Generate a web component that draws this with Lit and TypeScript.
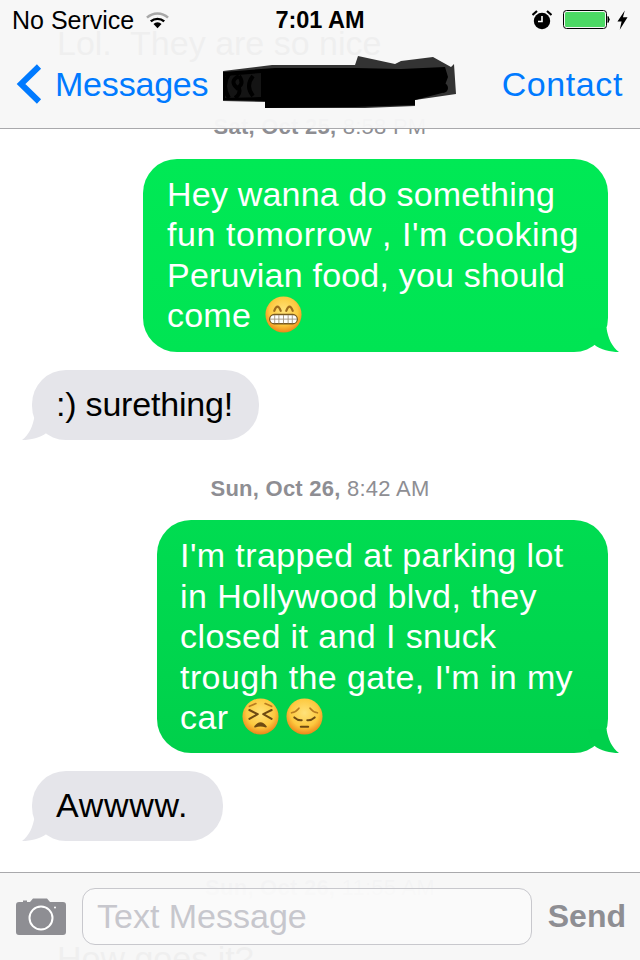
import { LitElement, html, css, svg } from "lit";
import { customElement } from "lit/decorators.js";

const faceDefs = svg`
  <defs>
    <radialGradient id="face" cx="50%" cy="40%" r="60%">
      <stop offset="0" stop-color="#ffe27a" />
      <stop offset="0.65" stop-color="#fdc93f" />
      <stop offset="1" stop-color="#ec861a" />
    </radialGradient>
  </defs>
`;

const faces: Record<string, ReturnType<typeof svg>> = {
  grin: svg`
    <path d="M10 16q3.500-9 7 0M23 16q3.500-9 7 0" fill="none" stroke="#a06c1c" stroke-width="2.400" stroke-linecap="round" />
    <rect x="5" y="20" width="30" height="10" rx="5" fill="#fff" stroke="#7a5a20" stroke-width="1.400" />
    <path d="M5.500 25h29M10.500 20.500v9M15 20.500v9M20 20.500v9M25 20.500v9M29.500 20.500v9" stroke="#a39680" stroke-width="1" />
  `,
  persevere: svg`
    <path d="M8 13l9 4.500-9 5M32 13l-9 4.500 9 5" fill="none" stroke="#6e4a12" stroke-width="2.200" stroke-linecap="round" stroke-linejoin="round" />
    <path d="M8 9l7-3M32 9l-7-3" fill="none" stroke="#b87c20" stroke-width="1.800" stroke-linecap="round" />
    <path d="M14 31q6-8 12 0q-6-2-12 0z" fill="#6e4a12" stroke="#6e4a12" stroke-width="1.600" stroke-linejoin="round" />
  `,
  pensive: svg`
    <path d="M6 16q5-1 8-5M34 16q-5-1-8-5" fill="none" stroke="#b87c20" stroke-width="1.800" stroke-linecap="round" />
    <path d="M9 21q4 3.500 8 3M31 21q-4 3.500-8 3" fill="none" stroke="#6e4a12" stroke-width="2.200" stroke-linecap="round" />
    <path d="M16 31h8" stroke="#6e4a12" stroke-width="2.200" stroke-linecap="round" />
  `,
};

function emoji(name: string) {
  return html`<svg class="emoji" viewBox="0 0 40 40">
    ${faceDefs}
    <circle cx="20" cy="20" r="19.500" fill="url(#face)" />
    ${faces[name]}
  </svg>`;
}

@customElement("app-root")
export class AppRoot extends LitElement {
  static styles = css`
    :host {
      display: block;
      position: relative;
      width: 640px;
      height: 960px;
      overflow: hidden;
      background: #fff;
      font-family: "Liberation Sans", Arial, sans-serif;
      color: #000;
    }

    .thread {
      display: flex;
      flex-direction: column;
      padding-top: 7px;
    }

    .stamp {
      font-size: 22px;
      line-height: 24px;
      letter-spacing: 0.25px;
      color: #8e8e93;
      text-align: center;
    }

    .stamp.first {
      margin-top: 36px;
      margin-bottom: 20px;
    }

    .stamp.second {
      margin-top: 37px;
      margin-bottom: 19px;
    }

    .stamp.third {
      margin-top: 35px;
      margin-bottom: 22px;
    }

    .bubble {
      position: relative;
      font-size: 34px;
      line-height: 40.500px;
      letter-spacing: 0.2px;
      border-radius: 34px;
      padding: 16px 25px 15px 25px;
      white-space: pre;
    }

    .out {
      align-self: flex-end;
      margin-right: 32px;
      color: #fff;
    }

    .in {
      align-self: flex-start;
      margin-left: 32px;
      background: #e5e5ea;
      margin-top: 18px;
      padding: 14px 26px 16px 24px;
      letter-spacing: -0.2px;
    }

    .in.aw {
      letter-spacing: 0.7px;
      padding-right: 35px;
    }

    .out.top {
      background: linear-gradient(#00e955, #00e453);
      padding-left: 24px;
      padding-right: 29px;
      padding-top: 15px;
      padding-bottom: 16px;
    }

    .wide {
      letter-spacing: 0.55px;
    }

    .out.low {
      background: linear-gradient(#00dc51, #00d04b);
      letter-spacing: 0.4px;
      padding: 15px 35px 15px 23px;
    }

    .ghost {
      align-self: flex-start;
      background: #e5e5ea;
      margin-left: 32px;
      letter-spacing: 0;
    }

    .tail {
      position: absolute;
      bottom: 0;
      width: 32px;
      height: 24px;
    }

    .out .tail {
      right: -12px;
    }

    .in .tail {
      left: -11px;
      transform: scaleX(-1);
    }

    .emoji {
      display: inline-block;
      width: 37px;
      height: 37px;
      margin: -10px 7px -10px 4px;
      vertical-align: 4px;
    }

    .emoji + .emoji {
      margin-left: 0;
    }

    .topbar {
      position: absolute;
      top: 0;
      left: 0;
      right: 0;
      height: 128px;
      background: rgba(247, 247, 247, 0.97);
      border-bottom: 1px solid #a9a9ac;
    }

    .status {
      display: grid;
      grid-template-columns: 1fr auto 1fr;
      align-items: center;
      height: 40px;
      padding: 0 12px 0 12px;
      font-size: 25px;
    }

    .status-left {
      display: flex;
      align-items: center;
      gap: 12px;
    }

    .status-right {
      display: flex;
      align-items: center;
      justify-content: flex-end;
    }

    .alarm {
      margin-right: 11px;
    }

    .bolt {
      margin-left: 7px;
    }

    .time {
      font-weight: 700;
      font-size: 23.500px;
    }

    .nav {
      display: flex;
      align-items: center;
      height: 88px;
      font-size: 34px;
      color: #007aff;
      padding: 0 17px 0 16px;
    }

    .back {
      display: flex;
      align-items: center;
      gap: 13px;
      flex: 1;
      letter-spacing: -0.2px;
    }

    .contact {
      letter-spacing: 0.6px;
    }

    .redact {
      position: absolute;
      left: 215px;
      top: 50px;
      width: 250px;
      height: 65px;
    }

    .inputbar {
      position: absolute;
      left: 0;
      right: 0;
      bottom: 0;
      height: 87px;
      background: rgba(247, 247, 247, 0.97);
      border-top: 1px solid #a9a9ac;
      display: flex;
      align-items: center;
      padding: 0 14px 0 16px;
    }

    .field {
      flex: 1;
      height: 57px;
      margin: -1px 16px 0 16px;
      border: 1px solid #c8c8cd;
      border-radius: 13px;
      background: rgba(255, 255, 255, 0.4);
      font-size: 34px;
      line-height: 55px;
      padding-left: 14px;
      color: #c7c7cd;
      box-sizing: border-box;
    }

    .send {
      font-size: 32px;
      font-weight: 700;
      color: #8e8e93;
    }
  `;

  private tail(color: string) {
    return html`<svg class="tail" viewBox="0 0 32 24">
      <path d="M18.500 0C20 10 24 19 31 24C22 24 13 22 6 16.500L0 0Z" fill=${color} />
    </svg>`;
  }

  render() {
    return html`
      <div class="thread">
        <div class="bubble ghost">Lol.  They are so nice</div>
        <div class="stamp first"><b>Sat, Oct 25,</b> 8:58 PM</div>
        <div class="bubble out top">Hey wanna do something
<span class="wide">fun tomorrow , I'm cooking</span>
Peruvian food, you should
come ${emoji("grin")}${this.tail("#00e453")}</div>
        <div class="bubble in">:) surething!${this.tail("#e5e5ea")}</div>
        <div class="stamp second"><b>Sun, Oct 26,</b> 8:42 AM</div>
        <div class="bubble out low">I'm trapped at parking lot
in Hollywood blvd, they
closed it and I snuck
trough the gate, I'm in my
car ${emoji("persevere")}${emoji("pensive")}${this.tail("#00d04b")}</div>
        <div class="bubble in aw">Awwww.${this.tail("#e5e5ea")}</div>
        <div class="stamp third"><b>Sun, Oct 26,</b> 11:55 AM</div>
        <div class="bubble ghost">How goes it?</div>
      </div>

      <div class="topbar">
        <div class="status">
          <div class="status-left">
            <span>No Service</span>
            <svg width="23" height="18" viewBox="0 0 24 18">
              <path d="M1 6.500a16 16 0 0 1 22 0" fill="none" stroke="#a8a8a8" stroke-width="2.600" />
              <path d="M5 10.500a10.500 10.500 0 0 1 14 0" fill="none" stroke="#000" stroke-width="2.600" />
              <path d="M12 17.500l-4.200-4.400a6 6 0 0 1 8.400 0z" fill="#000" />
            </svg>
          </div>
          <div class="time">7:01 AM</div>
          <div class="status-right">
            <svg class="alarm" width="20" height="20" viewBox="0 0 20 20">
              <circle cx="10" cy="11" r="8.200" fill="#000" />
              <path d="M10 6v5.500H6" fill="none" stroke="#fff" stroke-width="1.600" />
              <path d="M0.500 5L5 1M19.500 5L15 1" stroke="#000" stroke-width="2.200" />
            </svg>
            <svg width="47" height="20" viewBox="0 0 47 20">
              <rect x="0.500" y="0.500" width="43" height="18" rx="3" fill="none" stroke="#000" />
              <rect x="2" y="2" width="40" height="15" rx="1.500" fill="#4cd964" />
              <path d="M45 6.500q2.500 3 0 6z" fill="#000" stroke="#000" />
            </svg>
            <svg class="bolt" width="11" height="22" viewBox="0 0 12 22">
              <path d="M8.500 0.500L0.500 12.500H5L3 21.500L11.500 8H6.500z" fill="#000" />
            </svg>
          </div>
        </div>
        <div class="nav">
          <div class="back">
            <svg width="26" height="40" viewBox="0 0 26 40">
              <path d="M23 2.500L5 20L23 37.500" fill="none" stroke="#007aff" stroke-width="6" />
            </svg>
            <span>Messages</span>
          </div>
          <span class="contact">Contact</span>
        </div>
        <svg class="redact" viewBox="0 0 250 65">
          <path d="M143 6L180 14L186 11L218 7L236 17L239 14L241 44L200 50V56L150 58L50 58V52L8 51V21L57 15L140 15Z" fill="#333" />
          <path d="M8 22L60 18L140 18L186 19L230 17L233 27L227 43L200 50V55L140 57L50 58V51L8 50Z" fill="#000" />
          <path d="M10 26L46 23V47L10 48Z" fill="#141414" />
          <path d="M14 24Q6 36 14 48M24 26Q14 31 22 38Q30 34 24 26M24 38Q26 44 20 48M38 26Q30 36 38 46" fill="none" stroke="#000" stroke-width="4" />
          <circle cx="228" cy="38" r="5" fill="#000" />
        </svg>
      </div>

      <div class="inputbar">
        <svg width="50" height="37" viewBox="0 0 50 37">
          <path d="M3 4H7V2.500H11V4H14L17 0.500H31L34 4H47A3 3 0 0 1 50 7V34A3 3 0 0 1 47 37H3A3 3 0 0 1 0 34V7A3 3 0 0 1 3 4Z" fill="#8e8e93" />
          <circle cx="25" cy="20" r="11.500" fill="none" stroke="#fff" stroke-width="2" />
          <circle cx="39" cy="9.500" r="1" fill="#fff" />
        </svg>
        <div class="field">Text Message</div>
        <div class="send">Send</div>
      </div>
    `;
  }
}

declare global {
  interface HTMLElementTagNameMap {
    "app-root": AppRoot;
  }
}
